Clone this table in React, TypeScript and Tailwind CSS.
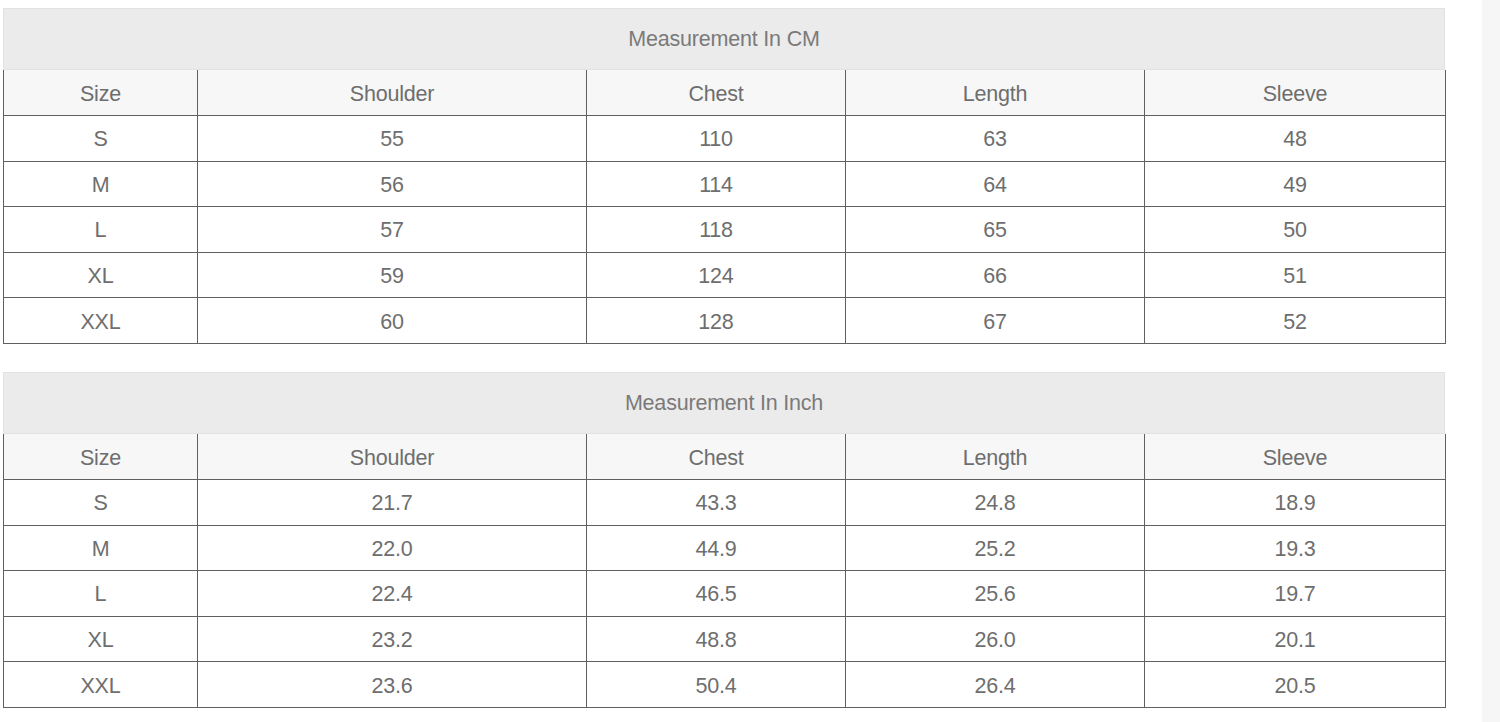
const headers = ["Size", "Shoulder", "Chest", "Length", "Sleeve"]

const cmRows = [
    ["S", "55", "110", "63", "48"],
    ["M", "56", "114", "64", "49"],
    ["L", "57", "118", "65", "50"],
    ["XL", "59", "124", "66", "51"],
    ["XXL", "60", "128", "67", "52"],
]

const inchRows = [
    ["S", "21.7", "43.3", "24.8", "18.9"],
    ["M", "22.0", "44.9", "25.2", "19.3"],
    ["L", "22.4", "46.5", "25.6", "19.7"],
    ["XL", "23.2", "48.8", "26.0", "20.1"],
    ["XXL", "23.6", "50.4", "26.4", "20.5"],
]

function SizeTable({ title, rows }: { title: string; rows: string[][] }) {
    return (
        <div className="w-[1442px]">
            {/* Title bar */}
            <div className="h-[62px] flex items-center justify-center bg-[#ebebeb] border border-[#e2e2e2] text-[#7a7a7a]">
                {title}
            </div>

            {/* Column headers */}
            <div className="grid grid-cols-[194px_389px_259px_299px_301px] h-[46px] bg-[#f7f7f7] border-l border-[#606060]">
                {headers.map((h) => (
                    <div
                        key={h}
                        className="flex items-center justify-center pt-[3px] border-r border-b border-[#606060]"
                    >
                        {h}
                    </div>
                ))}
            </div>

            {/* Data rows */}
            {rows.map((row) => (
                <div
                    key={row[0]}
                    className="grid grid-cols-[194px_389px_259px_299px_301px] h-[45.6px] bg-white border-l border-[#606060]"
                >
                    {row.map((cell, i) => (
                        <div
                            key={i}
                            className="flex items-center justify-center pt-[2px] border-r border-b border-[#606060]"
                        >
                            {cell}
                        </div>
                    ))}
                </div>
            ))}
        </div>
    )
}

export default function App() {
    return (
        <div className="relative w-[1500px] h-[722px] overflow-hidden bg-white font-['Liberation_Sans',Arial,sans-serif] text-[21.5px] text-[#6e6e6e] tracking-[-0.2px]">
            <div className="flex flex-col gap-[28px] pt-[8px] pl-[3px]">
                <SizeTable title="Measurement In CM" rows={cmRows} />
                <SizeTable title="Measurement In Inch" rows={inchRows} />
            </div>

            {/* faint scroll strip on the right */}
            <div className="absolute top-0 right-0 w-[18px] h-full bg-[#f6f6f6]" />
        </div>
    )
}
